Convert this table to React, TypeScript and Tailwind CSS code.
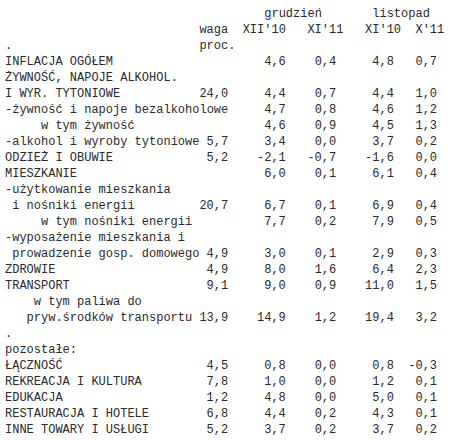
import React from "react";

type R = { l: string; i?: number; w?: string; v?: [string, string, string, string] };

const rows: R[] = [
  { l: "INFLACJA OGÓŁEM", v: ["4,6", "0,4", "4,8", "0,7"] },
  { l: "ŻYWNOŚĆ, NAPOJE ALKOHOL." },
  { l: "I WYR. TYTONIOWE", w: "24,0", v: ["4,4", "0,7", "4,4", "1,0"] },
  { l: "-żywność i napoje bezalkoholowe", v: ["4,7", "0,8", "4,6", "1,2"] },
  { l: "w tym żywność", i: 5, v: ["4,6", "0,9", "4,5", "1,3"] },
  { l: "-alkohol i wyroby tytoniowe", w: "5,7", v: ["3,4", "0,0", "3,7", "0,2"] },
  { l: "ODZIEŻ I OBUWIE", w: "5,2", v: ["-2,1", "-0,7", "-1,6", "0,0"] },
  { l: "MIESZKANIE", v: ["6,0", "0,1", "6,1", "0,4"] },
  { l: "-użytkowanie mieszkania" },
  { l: "i nośniki energii", i: 1, w: "20,7", v: ["6,7", "0,1", "6,9", "0,4"] },
  { l: "w tym nośniki energii", i: 5, v: ["7,7", "0,2", "7,9", "0,5"] },
  { l: "-wyposażenie mieszkania i" },
  { l: "prowadzenie gosp. domowego", i: 1, w: "4,9", v: ["3,0", "0,1", "2,9", "0,3"] },
  { l: "ZDROWIE", w: "4,9", v: ["8,0", "1,6", "6,4", "2,3"] },
  { l: "TRANSPORT", w: "9,1", v: ["9,0", "0,9", "11,0", "1,5"] },
  { l: "w tym paliwa do", i: 4 },
  { l: "pryw.środków transportu", i: 3, w: "13,9", v: ["14,9", "1,2", "19,4", "3,2"] },
  { l: "." },
  { l: "pozostałe:" },
  { l: "ŁĄCZNOŚĆ", w: "4,5", v: ["0,8", "0,0", "0,8", "-0,3"] },
  { l: "REKREACJA I KULTURA", w: "7,8", v: ["1,0", "0,0", "1,2", "0,1"] },
  { l: "EDUKACJA", w: "1,2", v: ["4,8", "0,0", "5,0", "0,1"] },
  { l: "RESTAURACJA I HOTELE", w: "6,8", v: ["4,4", "0,2", "4,3", "0,1"] },
  { l: "INNE TOWARY I USŁUGI", w: "5,2", v: ["3,7", "0,2", "3,7", "0,2"] },
];

const indent: Record<number, string> = {
  0: "",
  1: "pl-[1ch]",
  3: "pl-[3ch]",
  4: "pl-[4ch]",
  5: "pl-[5ch]",
};

function Row({ r }: { r: R }) {
  return (
    <div className="grid h-4 grid-cols-[27ch_4ch_8ch_7ch_8ch_6ch]">
      <div className={`whitespace-nowrap ${indent[r.i ?? 0]} ${r.w ? "" : "col-span-2"}`}>{r.l}</div>
      {r.w && <div className="text-right whitespace-nowrap">{r.w}</div>}
      {r.v && r.v.map((x, k) => (
        <div key={k} className="text-right whitespace-nowrap">{x}</div>
      ))}
    </div>
  );
}

export default function App() {
  return (
    <div
      className="h-[440px] w-[450px] overflow-hidden bg-white pl-[5px] pt-[6px] text-[12px] leading-4 text-[#2a2a2a]"
      style={{ fontFamily: '"Liberation Mono", monospace' }}
    >
      <div className="grid h-4 grid-cols-[36ch_15ch_8ch]">
        <div />
        <div>grudzień</div>
        <div>listopad</div>
      </div>
      <div className="grid h-4 grid-cols-[27ch_6ch_9ch_8ch_7ch_4ch] whitespace-nowrap">
        <div />
        <div>waga</div>
        <div>XII'10</div>
        <div>XI'11</div>
        <div>XI'10</div>
        <div>X'11</div>
      </div>
      <div className="grid h-4 grid-cols-[27ch_6ch]">
        <div>.</div>
        <div>proc.</div>
      </div>
      {rows.map((r, k) => (
        <Row key={k} r={r} />
      ))}
    </div>
  );
}
